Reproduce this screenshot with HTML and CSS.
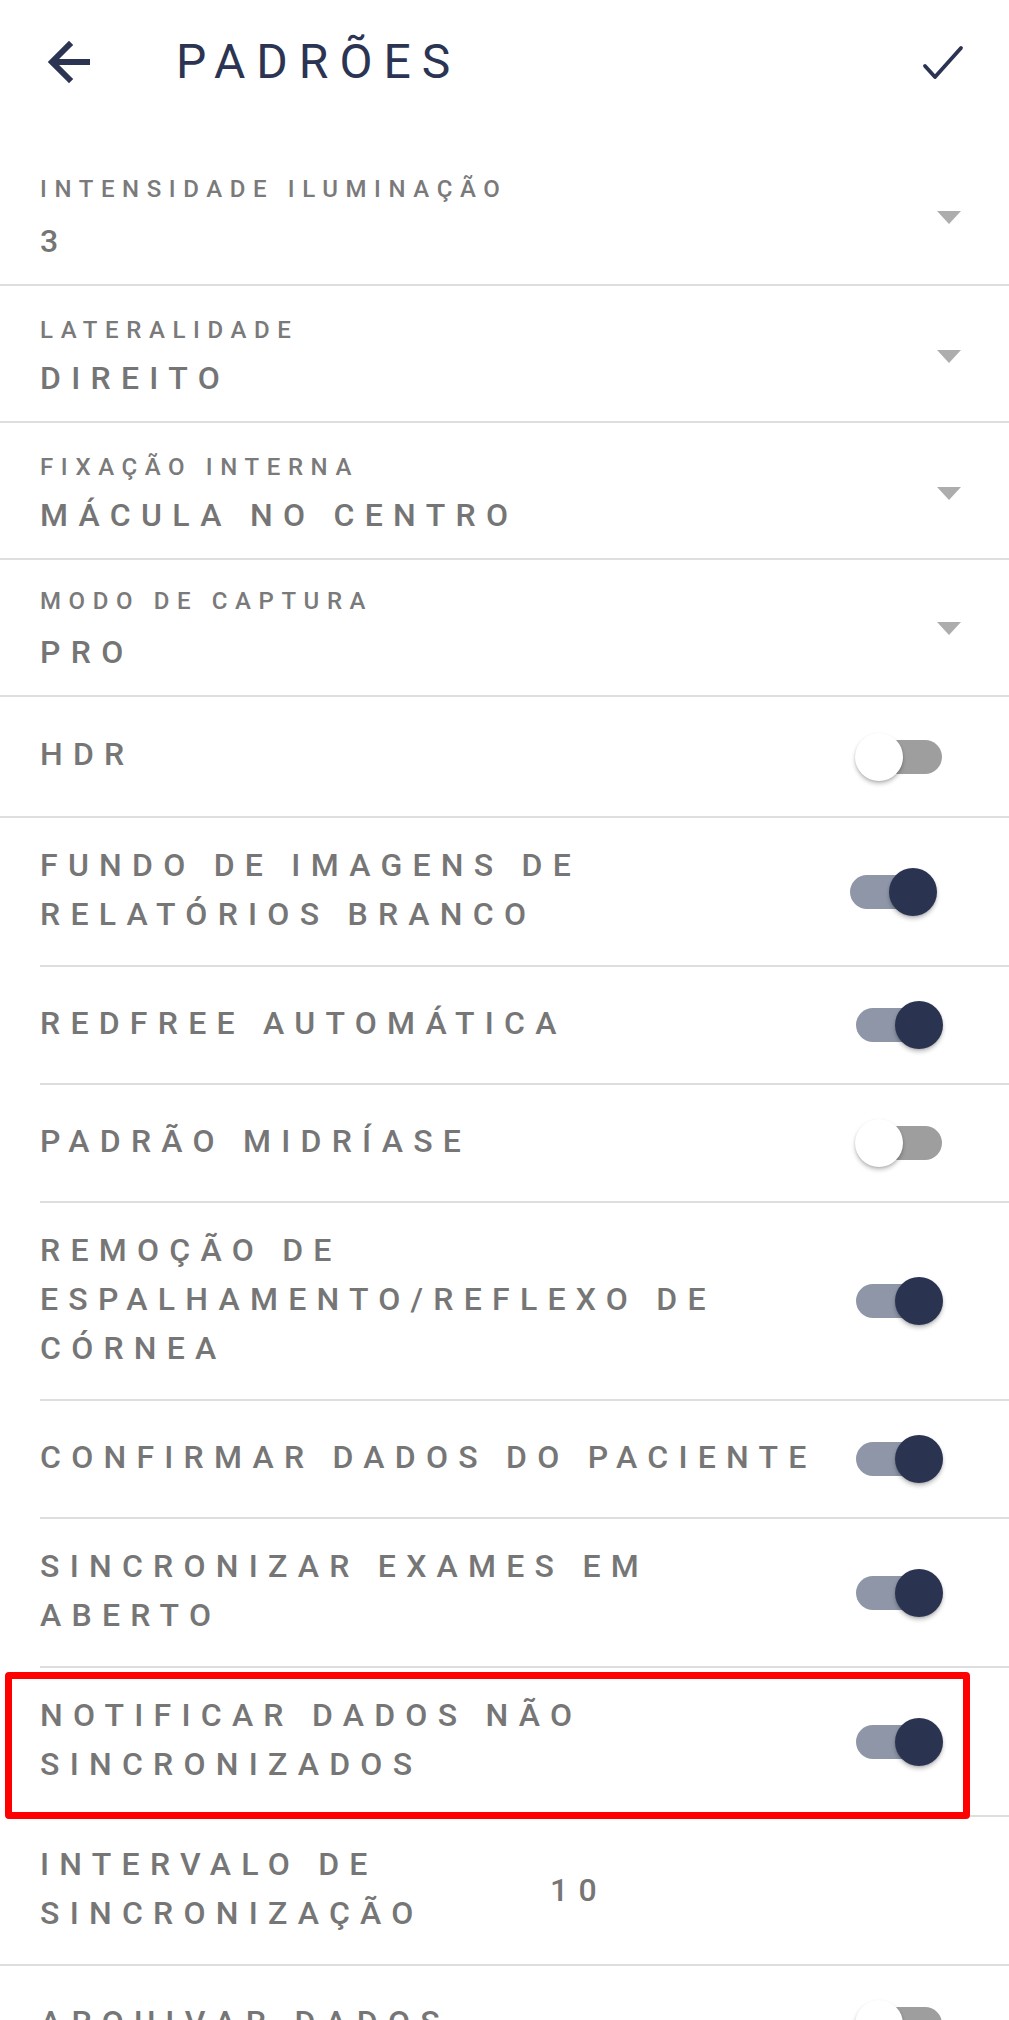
FILE: index.html
```html
<!DOCTYPE html>
<html lang="pt-BR">
<head>
<meta charset="utf-8">
<title>Padrões</title>
<link rel="stylesheet" href="styles.css">
</head>
<body>
<header class="header">
  <svg class="icon-back" width="50" height="50" viewBox="0 0 50 50" aria-label="Voltar">
    <path d="M25 8 L8 25 L25 42 M10 25 H43" fill="none" stroke="#2b3452" stroke-width="6" stroke-linecap="square" stroke-linejoin="miter"/>
  </svg>
  <h1 class="title">PADRÕES</h1>
  <svg class="icon-check" width="44" height="40" viewBox="0 0 44 40" aria-label="Confirmar">
    <path d="M4 24 L14 35 L40 6" fill="none" stroke="#2b3452" stroke-width="3.8" stroke-linecap="round" stroke-linejoin="round"/>
  </svg>
</header>

<main class="list">
  <div class="select select--first">
    <div class="select-text">
      <div class="select-label">INTENSIDADE ILUMINAÇÃO</div>
      <div class="select-value">3</div>
    </div>
    <span class="caret"></span>
  </div>
  <div class="select">
    <div class="select-text">
      <div class="select-label">LATERALIDADE</div>
      <div class="select-value">DIREITO</div>
    </div>
    <span class="caret"></span>
  </div>
  <div class="select">
    <div class="select-text">
      <div class="select-label">FIXAÇÃO INTERNA</div>
      <div class="select-value">MÁCULA NO CENTRO</div>
    </div>
    <span class="caret"></span>
  </div>
  <div class="select select--tight">
    <div class="select-text">
      <div class="select-label">MODO DE CAPTURA</div>
      <div class="select-value">PRO</div>
    </div>
    <span class="caret"></span>
  </div>

  <div class="item item--full">
    <div class="item-inner item-inner--first">
      <div class="item-label">HDR</div>
      <div class="toggle"><span class="track"></span><span class="thumb"></span></div>
    </div>
  </div>
  <div class="item">
    <div class="item-inner">
      <div class="item-label">FUNDO DE IMAGENS DE RELATÓRIOS BRANCO</div>
      <div class="toggle toggle--on toggle--nudge"><span class="track"></span><span class="thumb"></span></div>
    </div>
  </div>
  <div class="item">
    <div class="item-inner">
      <div class="item-label">REDFREE AUTOMÁTICA</div>
      <div class="toggle toggle--on"><span class="track"></span><span class="thumb"></span></div>
    </div>
  </div>
  <div class="item">
    <div class="item-inner">
      <div class="item-label">PADRÃO MIDRÍASE</div>
      <div class="toggle"><span class="track"></span><span class="thumb"></span></div>
    </div>
  </div>
  <div class="item">
    <div class="item-inner">
      <div class="item-label">REMOÇÃO DE ESPALHAMENTO/REFLEXO DE CÓRNEA</div>
      <div class="toggle toggle--on"><span class="track"></span><span class="thumb"></span></div>
    </div>
  </div>
  <div class="item">
    <div class="item-inner">
      <div class="item-label">CONFIRMAR DADOS DO PACIENTE</div>
      <div class="toggle toggle--on"><span class="track"></span><span class="thumb"></span></div>
    </div>
  </div>
  <div class="item">
    <div class="item-inner">
      <div class="item-label">SINCRONIZAR EXAMES EM ABERTO</div>
      <div class="toggle toggle--on"><span class="track"></span><span class="thumb"></span></div>
    </div>
  </div>
  <div class="item item--highlight">
    <div class="item-inner">
      <div class="item-label">NOTIFICAR DADOS NÃO SINCRONIZADOS</div>
      <div class="toggle toggle--on"><span class="track"></span><span class="thumb"></span></div>
    </div>
    <span class="highlight-box"></span>
  </div>
  <div class="item item--full">
    <div class="item-inner">
      <div class="item-label item-label--fixed">INTERVALO DE SINCRONIZAÇÃO</div>
      <div class="item-value">10</div>
    </div>
  </div>
  <div class="item">
    <div class="item-inner">
      <div class="item-label">ARQUIVAR DADOS</div>
      <div class="toggle"><span class="track"></span><span class="thumb"></span></div>
    </div>
  </div>
</main>
</body>
</html>
```

FILE: styles.css
```css
html, body {
  margin: 0;
  padding: 0;
  background: #ffffff;
}

body {
  font-family: Roboto, "Noto Sans", "Liberation Sans", sans-serif;
  color: #767676;
}

/* ---------- Header ---------- */
.header {
  display: flex;
  align-items: center;
  height: 124px;
  padding: 0 44px;
}

.icon-back,
.icon-check {
  display: block;
  flex: none;
}

.title {
  margin: 0 0 0 82px;
  font-size: 48px;
  font-weight: 400;
  letter-spacing: 11px;
  color: #2b3452;
  line-height: 56px;
}

.icon-check {
  margin-left: auto;
}

/* ---------- List ---------- */
.list {
  padding-top: 25px;
}

/* select rows */
.select {
  display: flex;
  align-items: center;
  padding: 30px 48px 25px 40px;
  border-bottom: 2px solid #dedede;
}

.select--first {
  padding-top: 26px;
}

.select--tight {
  padding-top: 27px;
}

.select-text {
  flex: 1;
  min-width: 0;
}

.select-label {
  font-size: 24px;
  line-height: 28px;
  font-weight: 500;
  letter-spacing: 7.6px;
  color: #7a7a7a;
}

.select-value {
  margin-top: 16px;
  font-size: 32px;
  line-height: 36px;
  font-weight: 500;
  letter-spacing: 10.3px;
  color: #757575;
}

.select--first .select-value {
  margin-top: 20px;
}

.select--tight .select-value {
  margin-top: 19px;
}

.caret {
  flex: none;
  width: 0;
  height: 0;
  border-left: 12px solid transparent;
  border-right: 12px solid transparent;
  border-top: 13px solid #adadad;
}

/* toggle / value rows */
.item {
  position: relative;
  padding-left: 40px;
}

.item--full {
  padding-left: 0;
  border-bottom: 2px solid #dedede;
}

.item-inner {
  display: flex;
  align-items: center;
  box-sizing: border-box;
  min-height: 118px;
  padding: 24.5px 67px 24.5px 0;
  border-bottom: 2px solid #dedede;
}

.item--full .item-inner {
  padding-left: 40px;
  border-bottom: none;
  min-height: 117px;
}

.item--full .item-inner--first {
  min-height: 119px;
}

.item-label {
  flex: 1;
  min-width: 0;
  margin: -2px 0 2px;
  font-size: 32px;
  line-height: 49px;
  font-weight: 500;
  letter-spacing: 10.25px;
  color: #767676;
}

.item-label--fixed {
  flex: 0 0 510px;
}

.item-value {
  font-size: 32px;
  line-height: 49px;
  font-weight: 500;
  letter-spacing: 10.25px;
  color: #767676;
}

/* toggle */
.toggle {
  position: relative;
  flex: none;
  width: 86px;
  height: 48px;
  margin-left: 11px;
}

.toggle--nudge {
  margin-right: 6px;
}

.track {
  position: absolute;
  left: 0;
  top: 7px;
  width: 86px;
  height: 34px;
  border-radius: 17px;
  background: #9e9e9e;
}

.thumb {
  position: absolute;
  top: 0;
  left: -1px;
  width: 48px;
  height: 48px;
  border-radius: 50%;
  background: #ffffff;
  box-shadow: 0 3px 4px rgba(0, 0, 0, 0.22), 0 1px 2px rgba(0, 0, 0, 0.12);
}

.toggle--on .track {
  background: #8e96a8;
}

.toggle--on .thumb {
  left: 39px;
  background: #2a3451;
}

/* annotation highlight */
.highlight-box {
  position: absolute;
  top: 4px;
  bottom: -2px;
  left: 5px;
  right: 39px;
  border: 7px solid #ff0000;
  border-radius: 4px;
  pointer-events: none;
}
```
